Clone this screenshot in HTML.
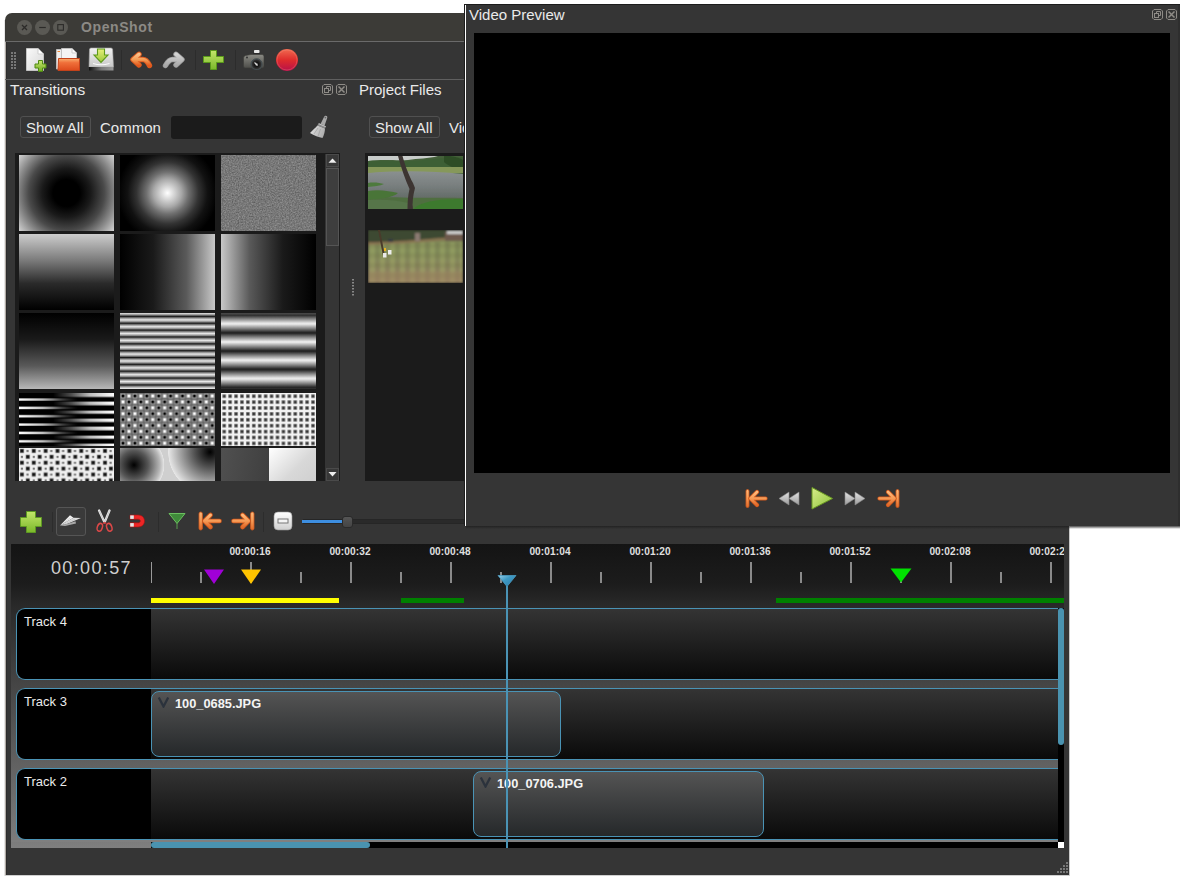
<!DOCTYPE html>
<html><head><meta charset="utf-8">
<style>
*{box-sizing:border-box}
html,body{margin:0;padding:0}
body{width:1180px;height:876px;position:relative;overflow:hidden;background:#fff;font-family:"Liberation Sans",sans-serif;color:#e6e6e6}
.a{position:absolute}
.t{position:absolute;white-space:nowrap;line-height:1}
.th{position:absolute;width:95px;height:76px}
.sep{position:absolute;width:1px;background:#2c2c2c}
.rl{position:absolute;top:547px;font-size:10.1px;font-weight:bold;color:#e0e0e0;white-space:nowrap;line-height:1;letter-spacing:0.1px}
.tk{position:absolute;width:2px;background:#8a8a8a}
</style></head><body>

<!-- white desktop strip left -->
<div class="a" style="left:4px;top:20px;width:1px;height:856px;background:#e6e6e6"></div>
<div class="a" style="left:5px;top:41px;width:1px;height:835px;background:#b0aaa4"></div>

<!-- MAIN WINDOW -->
<div class="a" style="left:6px;top:41px;width:1063px;height:834px;background:#353535;border-left:1px solid #2c2c2c"></div>
<!-- title bar -->
<div class="a" style="left:5px;top:13px;width:470px;height:28px;background:#3c3b37;border-top-left-radius:7px"></div>
<div class="a" style="left:5px;top:41px;width:470px;height:1px;background:#6a6a6a"></div>
<div class="a" style="left:17px;top:20px;width:15px;height:15px;border-radius:50%;background:#5a5954"></div>
<div class="a" style="left:35px;top:20px;width:15px;height:15px;border-radius:50%;background:#5a5954"></div>
<div class="a" style="left:53px;top:20px;width:15px;height:15px;border-radius:50%;background:#5a5954"></div>
<svg class="a" style="left:17px;top:20px" width="51" height="15">
 <path d="M5 5 L10 10 M10 5 L5 10" stroke="#2c2b29" stroke-width="1.3"/>
 <path d="M22.2 7.5 H28.8" stroke="#2c2b29" stroke-width="1.2"/>
 <rect x="40.8" y="4.6" width="5.6" height="5.6" fill="none" stroke="#2c2b29" stroke-width="1.1"/>
</svg>
<div class="t" style="left:81px;top:20px;font-size:14px;font-weight:bold;color:#8c8a85;letter-spacing:0.6px">OpenShot</div>

<!-- toolbar -->
<div class="a" style="left:5px;top:79px;width:470px;height:1px;background:#5f5f5f"></div>
<svg class="a" style="left:11px;top:52px" width="6" height="18">
 <g fill="#777"><rect x="0" y="0" width="2" height="2"/><rect x="3" y="0" width="2" height="2"/><rect x="0" y="3" width="2" height="2"/><rect x="3" y="3" width="2" height="2"/><rect x="0" y="6" width="2" height="2"/><rect x="3" y="6" width="2" height="2"/><rect x="0" y="9" width="2" height="2"/><rect x="3" y="9" width="2" height="2"/><rect x="0" y="12" width="2" height="2"/><rect x="3" y="12" width="2" height="2"/><rect x="0" y="15" width="2" height="2"/><rect x="3" y="15" width="2" height="2"/></g>
</svg>
<!-- new -->
<svg class="a" style="left:25px;top:47px" width="24" height="26">
 <defs><linearGradient id="pg" x1="0" y1="0" x2="1" y2="1"><stop offset="0" stop-color="#fafafa"/><stop offset="1" stop-color="#d6d6d6"/></linearGradient>
 <linearGradient id="gp" x1="0" y1="0" x2="0" y2="1"><stop offset="0" stop-color="#c8e66e"/><stop offset="1" stop-color="#72ad22"/></linearGradient></defs>
 <path d="M1.5 1.5 H13 L18.5 7 V23.5 H1.5 Z" fill="url(#pg)" stroke="#c4c4c4" stroke-width="1"/>
 <path d="M13 1.5 V7 H18.5" fill="#fff" stroke="#cfcfcf"/>
 <path d="M13.5 13.5 h4 v3.5 h3.5 v4 h-3.5 v3.5 h-4 v-3.5 h-3.5 v-4 h3.5 z" fill="url(#gp)" stroke="#4e8a12" stroke-width="1"/>
</svg>
<!-- open -->
<svg class="a" style="left:55px;top:48px" width="26" height="24">
 <defs><linearGradient id="og" x1="0" y1="0" x2="0" y2="1"><stop offset="0" stop-color="#f9b070"/><stop offset="0.35" stop-color="#f0703a"/><stop offset="1" stop-color="#dc4a1c"/></linearGradient></defs>
 <path d="M1.5 1.5 H11 V21 H1.5 Z" fill="#eee" stroke="#bbb"/>
 <path d="M2.5 3.5 H5" stroke="#f08a3a"/>
 <path d="M6.5 0.5 H17 L21.5 5 V21 H6.5 Z" fill="#f4f4f4" stroke="#c0c0c0"/>
 <path d="M17 0.5 V5 H21.5" fill="#fff" stroke="#ccc"/>
 <path d="M3.5 10.5 H24.5 V22.5 H3 Z" fill="url(#og)" stroke="#c4421a"/>
</svg>
<!-- save -->
<svg class="a" style="left:85px;top:45px" width="35" height="30">
 <defs><linearGradient id="sg" x1="0" y1="0" x2="0" y2="1"><stop offset="0" stop-color="#f2f2f2"/><stop offset="1" stop-color="#c8c8c8"/></linearGradient>
 <linearGradient id="sa" x1="0" y1="0" x2="0" y2="1"><stop offset="0" stop-color="#e6f07a"/><stop offset="1" stop-color="#9cc83a"/></linearGradient>
 <linearGradient id="sd" x1="0" y1="0" x2="1" y2="0"><stop offset="0" stop-color="#111"/><stop offset="0.5" stop-color="#777"/><stop offset="1" stop-color="#999"/></linearGradient></defs>
 <path d="M6 3 H26 Q27.5 3 27.6 4.5 L28.5 22 H4 L4.5 4.5 Q4.6 3 6 3 Z" fill="url(#sg)" stroke="#aaa" stroke-width="0.6"/>
 <path d="M8 18.5 Q16 21 24.5 18.5" stroke="#fafafa" stroke-width="1.2" fill="none"/>
 <rect x="4" y="22" width="24.5" height="3.5" fill="url(#sd)"/>
 <path d="M12.5 4 H19.5 V10 H23 L16 17.5 L9 10 H12.5 Z" fill="url(#sa)" stroke="#5e9a1c" stroke-width="1.1"/>
</svg>
<div class="sep" style="left:121px;top:50px;height:20px"></div>
<!-- undo -->
<svg class="a" style="left:125px;top:45px" width="30" height="28">
 <defs><linearGradient id="ug" x1="0" y1="0" x2="0" y2="1"><stop offset="0" stop-color="#fbc08a"/><stop offset="0.5" stop-color="#f39a52"/><stop offset="1" stop-color="#e4581c"/></linearGradient></defs>
 <path d="M14 9.3 L8 14.5 L14 20 M8.3 14.5 H18 Q21.5 14.5 24.5 20.5" fill="none" stroke="#dc5a1e" stroke-width="5.4" stroke-linecap="round" stroke-linejoin="round"/>
 <path d="M14 9.3 L8 14.5 L14 20 M8.3 14.5 H18 Q21.5 14.5 24.5 20.5" fill="none" stroke="url(#ug)" stroke-width="3.6" stroke-linecap="round" stroke-linejoin="round"/>
</svg>
<!-- redo -->
<svg class="a" style="left:160px;top:45px" width="30" height="28">
 <defs><linearGradient id="rdg" x1="0" y1="0" x2="0" y2="1"><stop offset="0" stop-color="#d4d4d4"/><stop offset="1" stop-color="#a8a8a8"/></linearGradient></defs>
 <path d="M16 9.3 L22 14.5 L16 20 M21.7 14.5 H12.5 Q9 14.5 5.5 20.5" fill="none" stroke="#9a9a9a" stroke-width="5.4" stroke-linecap="round" stroke-linejoin="round"/>
 <path d="M16 9.3 L22 14.5 L16 20 M21.7 14.5 H12.5 Q9 14.5 5.5 20.5" fill="none" stroke="url(#rdg)" stroke-width="3.8" stroke-linecap="round" stroke-linejoin="round"/>
</svg>
<div class="sep" style="left:195px;top:50px;height:20px"></div>
<!-- add track plus -->
<svg class="a" style="left:203px;top:49px" width="22" height="22">
 <defs><linearGradient id="gp2" x1="0" y1="0" x2="0" y2="1"><stop offset="0" stop-color="#c3e66a"/><stop offset="1" stop-color="#7ab82a"/></linearGradient></defs>
 <path d="M7.5 1.5 h6 v6 h7 v6 h-7 v7 h-6 v-7 h-7 v-6 h7 z" fill="url(#gp2)" stroke="#5a9a1a"/>
</svg>
<div class="sep" style="left:235px;top:50px;height:20px"></div>
<!-- camera -->
<svg class="a" style="left:242px;top:49px" width="24" height="21">
 <defs><linearGradient id="cb" x1="0" y1="0" x2="0" y2="1"><stop offset="0" stop-color="#8a8a84"/><stop offset="1" stop-color="#4e4e4a"/></linearGradient>
 <radialGradient id="cl" cx="0.5" cy="0.5" r="0.5"><stop offset="0" stop-color="#999"/><stop offset="0.35" stop-color="#111"/><stop offset="0.8" stop-color="#333"/><stop offset="1" stop-color="#5a6468"/></radialGradient></defs>
 <rect x="12" y="1" width="5.5" height="3" rx="0.8" fill="#e8e8e8"/>
 <rect x="11" y="4" width="7" height="2.5" fill="#2a2a2a"/>
 <path d="M1.5 9 Q1.5 7 3.5 6.5 L9 5.5 H20 Q22 5.5 22 7.5 V17 Q22 19 20 19 H3 Q1.5 19 1.5 17 Z" fill="url(#cb)" stroke="#3a3a38" stroke-width="0.6"/>
 <circle cx="14.6" cy="15.3" r="5.6" fill="url(#cl)" stroke="#3a4448" stroke-width="0.8"/>
 <path d="M12.5 13.5 L15.5 16.5" stroke="#ddd" stroke-width="1.2"/>
 <circle cx="5" cy="8.5" r="1" fill="#333"/>
</svg>
<!-- record -->
<svg class="a" style="left:275px;top:48px" width="24" height="24">
 <defs><linearGradient id="rg" x1="0" y1="0" x2="0" y2="1"><stop offset="0" stop-color="#f06a50"/><stop offset="0.5" stop-color="#de2c2c"/><stop offset="1" stop-color="#b8104a"/></linearGradient></defs>
 <circle cx="12" cy="12" r="11" fill="url(#rg)"/>
 <circle cx="12" cy="12" r="10" fill="none" stroke="#f4a090" stroke-opacity="0.35" stroke-width="0.8"/>
</svg>

<!-- DOCK: Transitions -->
<div class="t" style="left:10px;top:82px;font-size:15.5px;color:#eaeaea">Transitions</div>
<svg class="a" style="left:322px;top:84px" width="26" height="12">
 <g fill="none" stroke="#8e8b86" stroke-width="1">
  <path d="M2 0.5 H9 L10.5 2 V9 L9 10.5 H2 L0.5 9 V2 Z"/>
  <rect x="2.5" y="4.5" width="4" height="4"/><path d="M4.5 4.5 V2.5 H8.5 V6.5 H6.5"/>
  <path d="M16 0.5 H23 L24.5 2 V9 L23 10.5 H16 L14.5 9 V2 Z"/>
  <path d="M16.5 2.5 L22.5 8.5 M22.5 2.5 L16.5 8.5" stroke-width="1.5"/>
 </g>
</svg>
<div class="a" style="left:20px;top:116px;width:71px;height:22px;border:1px solid #505050;border-radius:3px;background:#353535"></div>
<div class="t" style="left:26px;top:120px;font-size:15px;color:#eaeaea">Show All</div>
<div class="t" style="left:100px;top:120px;font-size:15px;color:#eaeaea">Common</div>
<div class="a" style="left:171px;top:116px;width:131px;height:23px;border-radius:3px;background:#1b1b1b"></div>
<!-- broom -->
<svg class="a" style="left:309px;top:114px" width="20" height="25">
 <defs><linearGradient id="br" x1="0" y1="0" x2="1" y2="0.3"><stop offset="0" stop-color="#e4e4e4"/><stop offset="1" stop-color="#b0b0b0"/></linearGradient></defs>
 <path d="M11.5 10 L15 3 C16 0.8 19 1.6 18.2 4 L15.6 11.5 Z" fill="#a8a8a8"/>
 <circle cx="16.4" cy="3.6" r="0.9" fill="#666"/>
 <path d="M9.5 9 L17 12.2 L16 14.5 L8.5 11.5 Z" fill="#8a8a8a"/>
 <path d="M10 9.8 L16.6 12.6" stroke="#d8d8d8" stroke-width="0.8"/>
 <path d="M8.5 11.5 L16 14.5 C16 17.5 15 21 13.5 24 C10 23.5 5 21.5 1 19 C3.5 16.5 6.5 13.5 8.5 11.5 Z" fill="url(#br)"/>
 <path d="M5 20 L9 14 M9 22.5 L11.5 15" stroke="#999" stroke-width="0.6"/>
</svg>
<!-- transitions list -->
<div class="a" style="left:15px;top:153px;width:325px;height:328px;background:#1b1b1b"></div>
<!-- scrollbar -->
<div class="a" style="left:325px;top:154px;width:14px;height:327px;background:#353535"></div>
<div class="a" style="left:326px;top:154px;width:13px;height:13px;border:1px solid #4a4a4a;background:#383838"></div>
<svg class="a" style="left:326px;top:154px" width="13" height="13"><path d="M2.5 8.8 L6.5 4.5 L10.5 8.8 Z" fill="#eee"/></svg>
<div class="a" style="left:326px;top:168px;width:13px;height:78px;border:1px solid #555;background:#3e3e3e"></div>
<div class="a" style="left:326px;top:468px;width:13px;height:13px;border:1px solid #4a4a4a;background:#383838"></div>
<svg class="a" style="left:326px;top:468px" width="13" height="13"><path d="M2.5 4 L6.5 8.5 L10.5 4 Z" fill="#eee"/></svg>

<!-- thumbnails row 1 -->
<div class="th" style="left:19px;top:155px;background:radial-gradient(circle 61px at 50% 50%,#000 0%,#000 22%,#1a1a1a 40%,#4a4a4a 62%,#8a8a8a 80%,#d4d4d4 100%)"></div>
<div class="th" style="left:120px;top:155px;background:radial-gradient(circle 50px at 50% 50%,#fff 0%,#e6e6e6 8%,#a8a8a8 28%,#707070 42%,#333 62%,#111 80%,#000 100%)"></div>
<div class="th" style="left:221px;top:155px;background:#7a7a7a"><svg width="95" height="76"><filter id="nz" x="0" y="0" width="100%" height="100%" color-interpolation-filters="sRGB"><feTurbulence type="fractalNoise" baseFrequency="0.7" numOctaves="3" seed="5"/><feColorMatrix type="matrix" values="0.3 0 0 0 0.32  0.3 0 0 0 0.32  0.3 0 0 0 0.32  0 0 0 0 1"/></filter><rect width="95" height="76" filter="url(#nz)"/></svg></div>
<!-- row 2 -->
<div class="th" style="left:19px;top:234px;background:linear-gradient(to bottom,#cdcdcd 0%,#7a7a7a 35%,#2a2a2a 65%,#000 100%)"></div>
<div class="th" style="left:120px;top:234px;background:linear-gradient(to right,#000 0%,#1a1a1a 35%,#5a5a5a 70%,#c8c8c8 100%)"></div>
<div class="th" style="left:221px;top:234px;background:linear-gradient(to left,#000 0%,#1a1a1a 35%,#5a5a5a 70%,#c8c8c8 100%)"></div>
<!-- row 3 -->
<div class="th" style="left:19px;top:313px;background:linear-gradient(to bottom,#000 0%,#1a1a1a 35%,#5a5a5a 70%,#b8b8b8 100%)"></div>
<div class="th" style="left:120px;top:313px;background:repeating-linear-gradient(to bottom,#e8e8e8 0px,#8a8a8a 2px,#1a1a1a 3.4px,#8a8a8a 5px,#e8e8e8 6.85px)"></div>
<div class="th" style="left:221px;top:313px;background:repeating-linear-gradient(to bottom,#1a1a1a 0px,#8a8a8a 4.6px,#f4f4f4 9.15px,#8a8a8a 13.7px,#1a1a1a 18.3px);background-position:0 1.5px"></div>
<!-- row 4 -->
<div class="th" style="left:19px;top:393px;height:53px;background:#000;overflow:hidden">
 <div class="a" style="left:0;top:0;width:95px;height:53px;background:repeating-linear-gradient(to bottom,#000 0px,#000 4.6px,#fff 6px,#fff 7.2px,#000 8.35px);-webkit-mask-image:linear-gradient(to right,#000 0%,rgba(0,0,0,.75) 25%,rgba(0,0,0,.3) 45%,transparent 62%)"></div>
 <div class="a" style="left:0;top:0;width:95px;height:53px;background:repeating-linear-gradient(to bottom,#fff 0px,#fff 2.8px,#000 4px,#000 8.35px);background-position:0 0.6px;-webkit-mask-image:linear-gradient(to left,#000 0%,rgba(0,0,0,.75) 25%,rgba(0,0,0,.3) 45%,transparent 64%)"></div>
</div>
<div class="th" style="left:120px;top:393px;height:53px;background:#5e5e5e;overflow:hidden">
 <svg width="95" height="53"><defs><pattern id="ck" width="11.9" height="11.8" patternUnits="userSpaceOnUse" x="0" y="0">
  <rect x="0.6" y="0.6" width="4.8" height="4.8" fill="#a8a8a8"/><rect x="1.6" y="1.6" width="2.8" height="2.8" fill="#000"/>
  <rect x="6.55" y="0.6" width="4.8" height="4.8" fill="#8c8c8c"/><rect x="7.55" y="1.6" width="2.8" height="2.8" fill="#fff"/>
  <rect x="0.6" y="6.5" width="4.8" height="4.8" fill="#8c8c8c"/><rect x="1.6" y="7.5" width="2.8" height="2.8" fill="#fff"/>
  <rect x="6.55" y="6.5" width="4.8" height="4.8" fill="#a8a8a8"/><rect x="7.55" y="7.5" width="2.8" height="2.8" fill="#000"/>
 </pattern></defs><rect width="95" height="53" fill="url(#ck)"/></svg>
</div>
<div class="th" style="left:221px;top:393px;height:53px;background:#f2f2f2;overflow:hidden">
 <svg width="95" height="53"><defs><pattern id="ws" width="5.92" height="5.9" patternUnits="userSpaceOnUse" x="0.3" y="0.3"><rect x="1" y="1" width="3.8" height="3.8" fill="#aaa"/><rect x="1.5" y="1.5" width="2.8" height="2.8" fill="#383838"/></pattern></defs><rect width="95" height="53" fill="url(#ws)"/></svg>
</div>
<!-- row 5 -->
<div class="th" style="left:19px;top:448px;height:33px;background:#f0f0f0;overflow:hidden">
 <svg width="95" height="33"><defs><pattern id="bs" width="11.875" height="11.8" patternUnits="userSpaceOnUse" x="0" y="0"><rect x="0.6" y="0.6" width="4.6" height="4.6" fill="#aaa"/><rect x="1.3" y="1.3" width="3.2" height="3.2" fill="#111"/><rect x="7.4" y="1.9" width="2.2" height="2.2" fill="#777"/><rect x="1.8" y="7.8" width="2.2" height="2.2" fill="#777"/><rect x="6.5" y="6.5" width="4.6" height="4.6" fill="#aaa"/><rect x="7.2" y="7.2" width="3.2" height="3.2" fill="#111"/></pattern></defs><rect width="95" height="33" fill="url(#bs)"/></svg>
</div>
<div class="th" style="left:120px;top:448px;height:33px;overflow:hidden;background:radial-gradient(circle 30.5px at 14px 17px,#000 0px,#555 14px,#b8b8b8 26px,#e4e4e4 30px,transparent 30.5px),radial-gradient(circle 42px at 90px 4px,#000 0px,#555 16px,#b0b0b0 32px,#e6e6e6 41.5px,#cfcfcf 42px)"></div>
<div class="th" style="left:221px;top:448px;height:33px;overflow:hidden;background:linear-gradient(100deg,#505050 0%,#404040 50%,#2c2c2c 100%)">
 <div class="a" style="left:48px;top:0;width:47px;height:33px;background:linear-gradient(135deg,#ffffff,#d8d8d8 60%,#cfcfcf)"></div>
</div>

<!-- splitter dots -->
<svg class="a" style="left:352px;top:279px" width="3" height="18"><g fill="#888"><rect y="0" width="2" height="1.5"/><rect y="3" width="2" height="1.5"/><rect y="6" width="2" height="1.5"/><rect y="9" width="2" height="1.5"/><rect y="12" width="2" height="1.5"/><rect y="15" width="2" height="1.5"/></g></svg>

<!-- DOCK: Project Files -->
<div class="t" style="left:359px;top:82px;font-size:15px;color:#eaeaea">Project Files</div>
<div class="a" style="left:369px;top:116px;width:71px;height:22px;border:1px solid #505050;border-radius:3px;background:#353535"></div>
<div class="t" style="left:375px;top:120px;font-size:15px;color:#eaeaea">Show All</div>
<div class="t" style="left:449px;top:120px;font-size:15px;color:#eaeaea">Video</div>
<div class="a" style="left:365px;top:153px;width:110px;height:328px;background:#1b1b1b"></div>
<!-- project file thumbs -->
<svg class="a" style="left:368px;top:156px" width="95" height="53">
 <defs>
  <linearGradient id="pond" x1="0" y1="0" x2="0" y2="1"><stop offset="0" stop-color="#8a9090"/><stop offset="0.5" stop-color="#7a8080"/><stop offset="1" stop-color="#646c68"/></linearGradient>
  <filter id="bl1"><feGaussianBlur stdDeviation="0.7"/></filter>
 </defs>
 <rect width="95" height="53" fill="#4f6e40"/>
 <g filter="url(#bl1)">
 <rect width="95" height="12" fill="#44603a"/>
 <path d="M0 0 H70 C60 3 50 2 40 4 C30 5 15 3 0 5 Z" fill="#c8ccca"/>
 <path d="M0 5 C15 4 30 6 45 5 C60 4 70 2 95 1 V12 H0 Z" fill="#3e5e34"/>
 <path d="M76 0 C82 -1 92 2 95 4 V14 C88 13 80 10 76 6 Z" fill="#2e4e28"/>
 <rect y="11" width="95" height="6" fill="#86985a"/>
 <path d="M0 17 C20 15 60 14 95 18 V42 C70 41 40 43 0 40 Z" fill="url(#pond)"/>
 <path d="M0 27 C6 26 12 27 16 28 C12 30 6 30 0 31 Z" fill="#4e7a3c"/>
 <path d="M0 35 C10 33 22 35 30 37 C25 42 10 43 0 44 Z" fill="#4a7438"/>
 <path d="M45 53 C55 44 75 43 95 43 V53 Z" fill="#3e7a2e"/>
 <path d="M0 44 C15 43 30 44 45 48 V53 H0 Z" fill="#56744a"/>
 </g>
 <path d="M30 0 L34.5 0 C37 9 41 20 45 27 L47 32 C45 40 44 47 45 53 L39.5 53 C39.5 46 40 39 41.5 33 C37 23 33 11 30 0 Z" fill="#3e3632" filter="url(#bl1)"/>
</svg>
<svg class="a" style="left:368px;top:230px" width="95" height="53">
 <defs>
  <linearGradient id="fld" x1="0" y1="0" x2="0" y2="1"><stop offset="0" stop-color="#7c8656"/><stop offset="0.45" stop-color="#808a58"/><stop offset="1" stop-color="#957f62"/></linearGradient>
  <filter id="bl2"><feGaussianBlur stdDeviation="1"/></filter>
  <pattern id="chk" width="10" height="10" patternUnits="userSpaceOnUse" x="2" y="3"><rect width="5" height="10" fill="#b4c070" opacity="0.3"/><rect width="10" height="5" fill="#6a6a40" opacity="0.18"/></pattern>
 </defs>
 <g filter="url(#bl2)">
 <rect width="95" height="53" fill="url(#fld)"/>
 <rect y="12" width="95" height="41" fill="url(#chk)"/>
 <path d="M0 0 H95 V6 C80 8 60 9 40 11 C25 12 10 12 0 13 Z" fill="#3e4830"/>
 <path d="M0 12 C20 12 50 10 95 6 V9 C60 12 30 14 0 15 Z" fill="#8a6e50" opacity="0.8"/>
 <path d="M0 42 H95 V53 H0 Z" fill="#9c8460" opacity="0.5"/>
 <rect x="77" y="2" width="18" height="9" fill="#6e5a4d"/>
 <rect x="79" y="1" width="16" height="3" fill="#d0d0d0"/>
 <rect x="47" y="3" width="5" height="8" fill="#8a7a72"/>
 <rect x="20" y="9" width="5" height="3" fill="#303840"/>
 </g>
 <path d="M10 0 L12 0 L17 26 L15 26 Z" fill="#4a3a2a" filter="url(#bl1)"/>
 <rect x="15" y="23" width="3.5" height="4.5" fill="#eaeaea"/>
 <rect x="20" y="20" width="3.5" height="4.5" fill="#eee"/>
 <rect x="16" y="18" width="2" height="3" fill="#e8b020"/>
</svg>

<!-- TIMELINE TOOLBAR -->
<svg class="a" style="left:20px;top:511px" width="22" height="22">
 <path d="M6.5 0.5 h9 v6 h6 v9 h-6 v6 h-9 v-6 h-6 v-9 h6 z" fill="url(#gp2)" stroke="#5e9a22"/>
</svg>
<div class="sep" style="left:52px;top:512px;height:20px"></div>
<div class="a" style="left:56px;top:507px;width:30px;height:29px;border:1px solid #555;border-radius:3px;background:#3a3a3a"></div>
<svg class="a" style="left:59px;top:513px" width="24" height="15">
 <path d="M1 12.4 L11 2.3 L14.5 4.8 Z" fill="#f2f2f2"/>
 <path d="M1 12.4 L14.5 4.8 L22 5 L8.5 10.8 Z" fill="#dcdcdc"/>
 <path d="M1 12.4 L8.5 10.8 L16.5 8.3 L17 10.6 L6 12.9 Z" fill="#a8a8a8"/>
 <path d="M3 11.6 L11.5 4.5 M5 11.5 L16 6.2" stroke="#bbb" stroke-width="0.5"/>
</svg>
<svg class="a" style="left:95px;top:509px" width="20" height="24">
 <path d="M4.1 1.5 L9.6 13.4 M14.5 1.5 L9.6 13.4" stroke="#e8e8e8" stroke-width="2.3" stroke-linecap="round"/>
 <path d="M4.1 1.5 L9.6 13.4 M14.5 1.5 L9.6 13.4" stroke="#aaa" stroke-width="0.5"/>
 <ellipse cx="4.8" cy="18.3" rx="2.5" ry="4" fill="none" stroke="#dd4848" stroke-width="1.5" transform="rotate(20 4.8 18.3)"/>
 <ellipse cx="14.3" cy="18.3" rx="2.5" ry="4" fill="none" stroke="#dd4848" stroke-width="1.5" transform="rotate(-20 14.3 18.3)"/>
 <path d="M8 14 L11.2 14" stroke="#c83030" stroke-width="1.5"/>
</svg>
<svg class="a" style="left:129px;top:513px" width="17" height="16">
 <path d="M1 2 H9 C13.3 2 15.5 4.8 15.5 8 C15.5 11.2 13.3 14 9 14 H1 V9.8 H9 C10.5 9.8 11.3 9 11.3 8 C11.3 7 10.5 6.2 9 6.2 H1 Z" fill="#ec2626" stroke="#a81010" stroke-width="0.6"/>
 <rect x="1.2" y="2.4" width="3.6" height="3.5" fill="#e0e8e8"/><rect x="1.2" y="10.1" width="3.6" height="3.5" fill="#e0e8e8"/>
</svg>
<div class="sep" style="left:158px;top:512px;height:20px"></div>
<svg class="a" style="left:168px;top:512px" width="19" height="18">
 <path d="M1 1.5 H17 L9 11.5 Z" fill="#3f8a3a" stroke="#6cc060" stroke-width="1"/>
 <path d="M9 11 V17" stroke="#5aa050" stroke-width="1"/>
</svg>
<svg class="a" style="left:197px;top:511px" width="26" height="20">
 <rect x="2" y="1" width="3.4" height="18" rx="1.7" fill="url(#or)" stroke="#d2581c" stroke-width="0.8"/>
 <path d="M7.5 10 L13.5 4 M7.5 10 L13.5 16 M7.5 10 H22.5" stroke="#d2581c" stroke-width="4.6" stroke-linecap="round" fill="none"/>
 <path d="M7.5 10 L13.5 4 M7.5 10 L13.5 16 M7.5 10 H22.5" stroke="url(#or)" stroke-width="3" stroke-linecap="round" fill="none"/>
</svg>
<svg class="a" style="left:230px;top:511px" width="26" height="20">
 <rect x="20.6" y="1" width="3.4" height="18" rx="1.7" fill="url(#or)" stroke="#d2581c" stroke-width="0.8"/>
 <path d="M18.5 10 L12.5 4 M18.5 10 L12.5 16 M18.5 10 H3.5" stroke="#d2581c" stroke-width="4.6" stroke-linecap="round" fill="none"/>
 <path d="M18.5 10 L12.5 4 M18.5 10 L12.5 16 M18.5 10 H3.5" stroke="url(#or)" stroke-width="3" stroke-linecap="round" fill="none"/>
</svg>
<div class="sep" style="left:263px;top:512px;height:20px"></div>
<svg class="a" style="left:273px;top:511px" width="20" height="20">
 <defs><linearGradient id="zw" x1="0" y1="0" x2="0" y2="1"><stop offset="0" stop-color="#fff"/><stop offset="1" stop-color="#cfcfcf"/></linearGradient></defs>
 <rect x="1" y="1" width="18" height="18" rx="4" fill="url(#zw)" stroke="#999" stroke-width="0.6"/>
 <rect x="5" y="8" width="10" height="4" fill="#f4f4f4" stroke="#777" stroke-width="1"/>
</svg>
<div class="a" style="left:302px;top:519px;width:170px;height:5px;border-radius:2px;background:#2a2a2a;border:1px solid #262626"></div>
<div class="a" style="left:302px;top:520px;width:42px;height:3px;background:#3d8ee0"></div>
<div class="a" style="left:342px;top:516px;width:11px;height:12px;border-radius:3px;background:linear-gradient(#555,#444);border:1px solid #2a2a2a"></div>

<!-- TIMELINE -->
<div class="a" style="left:11px;top:544px;width:1053px;height:304px;background:linear-gradient(to bottom,#141414 0px,#1c1c1c 40px,#292929 61px,#454545 140px,#616161 220px,#7c7c7c 297px,#7f7f7f 304px)"></div>
<div class="t" style="left:51px;top:559px;font-size:18px;color:#cfcfcf;letter-spacing:1.35px">00:00:57</div>

<div class="tk" style="left:151px;top:562px;height:21px;width:1px;background:#9a9a9a"></div>
<div class="tk" style="left:250px;top:562px;height:21px"></div>
<div class="tk" style="left:350px;top:562px;height:21px"></div>
<div class="tk" style="left:450px;top:562px;height:21px"></div>
<div class="tk" style="left:550px;top:562px;height:21px"></div>
<div class="tk" style="left:650px;top:562px;height:21px"></div>
<div class="tk" style="left:750px;top:562px;height:21px"></div>
<div class="tk" style="left:850px;top:562px;height:21px"></div>
<div class="tk" style="left:950px;top:562px;height:21px"></div>
<div class="tk" style="left:1050px;top:562px;height:21px"></div>
<div class="tk" style="left:200px;top:572px;height:11px"></div>
<div class="tk" style="left:300px;top:572px;height:11px"></div>
<div class="tk" style="left:400px;top:572px;height:11px"></div>
<div class="tk" style="left:500px;top:572px;height:11px"></div>
<div class="tk" style="left:600px;top:572px;height:11px"></div>
<div class="tk" style="left:700px;top:572px;height:11px"></div>
<div class="tk" style="left:800px;top:572px;height:11px"></div>
<div class="tk" style="left:900px;top:572px;height:11px"></div>
<div class="tk" style="left:1000px;top:572px;height:11px"></div>

<div class="rl" style="left:229px;width:42px;text-align:center">00:00:16</div>
<div class="rl" style="left:329px;width:42px;text-align:center">00:00:32</div>
<div class="rl" style="left:429px;width:42px;text-align:center">00:00:48</div>
<div class="rl" style="left:529px;width:42px;text-align:center">00:01:04</div>
<div class="rl" style="left:629px;width:42px;text-align:center">00:01:20</div>
<div class="rl" style="left:729px;width:42px;text-align:center">00:01:36</div>
<div class="rl" style="left:829px;width:42px;text-align:center">00:01:52</div>
<div class="rl" style="left:929px;width:42px;text-align:center">00:02:08</div>
<div class="a" style="left:1029px;top:540px;width:35px;height:20px;overflow:hidden"><div class="rl" style="left:0;top:7px;width:42px;text-align:center">00:02:24</div></div>
<div class="a" style="left:1064px;top:540px;width:5px;height:320px;background:#353535"></div>
<svg class="a" style="left:200px;top:567px" width="70" height="20">
 <path d="M4 2.5 H24 L14 17 Z" fill="#a000d8"/>
 <path d="M41 2.5 H61 L51 17 Z" fill="#ffc400"/>
</svg>
<svg class="a" style="left:888px;top:566px" width="26" height="20">
 <path d="M2.5 2.5 H23.5 L13 16.5 Z" fill="#00e000"/>
</svg>
<div class="a" style="left:151px;top:598px;width:188px;height:5px;background:#ffff00"></div>
<div class="a" style="left:401px;top:598px;width:63px;height:5px;background:#008000"></div>
<div class="a" style="left:776px;top:598px;width:288px;height:5px;background:#008000"></div>

<div class="a" style="left:16px;top:608px;width:1042px;height:72px;border:1px solid #4a93b5;border-right:none;border-radius:9px 0 0 9px;background:#000;overflow:hidden">
 <div class="a" style="left:134px;top:0;width:908px;height:70px;background:linear-gradient(to bottom,#343434,#0a0a0a)"></div>
</div>
<div class="t" style="left:24px;top:615px;font-size:13px;color:#ececec">Track 4</div>
<div class="a" style="left:16px;top:688px;width:1042px;height:72px;border:1px solid #4a93b5;border-right:none;border-radius:9px 0 0 9px;background:#000;overflow:hidden">
 <div class="a" style="left:134px;top:0;width:908px;height:70px;background:linear-gradient(to bottom,#343434,#0a0a0a)"></div>
</div>
<div class="t" style="left:24px;top:695px;font-size:13px;color:#ececec">Track 3</div>
<div class="a" style="left:16px;top:768px;width:1042px;height:72px;border:1px solid #4a93b5;border-right:none;border-radius:9px 0 0 9px;background:#000;overflow:hidden">
 <div class="a" style="left:134px;top:0;width:908px;height:70px;background:linear-gradient(to bottom,#343434,#0a0a0a)"></div>
</div>
<div class="t" style="left:24px;top:775px;font-size:13px;color:#ececec">Track 2</div>
<div class="a" style="left:151px;top:691px;width:410px;height:66px;border:1.5px solid #4a93b5;border-radius:8px;background:linear-gradient(to bottom,#545454,#25282a)"></div>
<svg class="a" style="left:157px;top:696px" width="13" height="12"><path d="M1.8 1.5 L6.5 10.5 L11.2 1.5" fill="none" stroke="#2b323c" stroke-width="2.3" stroke-linejoin="miter"/></svg>
<div class="t" style="left:175px;top:697px;font-size:12.8px;font-weight:bold;color:#f4f4f4;margin-top:1px">100_0685.JPG</div>
<div class="a" style="left:473px;top:771px;width:291px;height:66px;border:1.5px solid #4a93b5;border-radius:8px;background:linear-gradient(to bottom,#545454,#25282a)"></div>
<svg class="a" style="left:479px;top:776px" width="13" height="12"><path d="M1.8 1.5 L6.5 10.5 L11.2 1.5" fill="none" stroke="#2b323c" stroke-width="2.3" stroke-linejoin="miter"/></svg>
<div class="t" style="left:497px;top:777px;font-size:12.8px;font-weight:bold;color:#f4f4f4;margin-top:1px">100_0706.JPG</div>
<div class="a" style="left:11px;top:840px;width:1047px;height:2px;background:#7f7f7f"></div>
<div class="a" style="left:151px;top:842px;width:907px;height:6px;background:#000"></div>
<div class="a" style="left:151px;top:842px;width:219px;height:6px;border-radius:3px;background:#4a93b0"></div>
<div class="a" style="left:1058px;top:608px;width:6px;height:240px;background:#000"></div>
<div class="a" style="left:1058px;top:608px;width:6px;height:137px;border-radius:3px;background:#4a93b0"></div>
<div class="a" style="left:1058px;top:842px;width:6px;height:6px;background:#fff"></div>
<div class="a" style="left:506px;top:586px;width:2px;height:262px;background:#4a93b5"></div>
<svg class="a" style="left:497px;top:574px" width="20" height="14">
 <defs><linearGradient id="ph" x1="0" y1="0" x2="1" y2="1"><stop offset="0" stop-color="#9ad0ea"/><stop offset="0.4" stop-color="#3f9ac4"/><stop offset="1" stop-color="#2a7aa8"/></linearGradient></defs>
 <path d="M1 1.5 H19 L10 12.5 Z" fill="url(#ph)" stroke="#4a9ac0" stroke-width="0.8"/>
</svg>
<!-- size grip -->
<svg class="a" style="left:1057px;top:862px" width="12" height="12"><g fill="#777">
 <rect x="9" y="0" width="2" height="2"/><rect x="6" y="3" width="2" height="2"/><rect x="9" y="3" width="2" height="2"/>
 <rect x="3" y="6" width="2" height="2"/><rect x="6" y="6" width="2" height="2"/><rect x="9" y="6" width="2" height="2"/>
 <rect x="0" y="9" width="2" height="2"/><rect x="3" y="9" width="2" height="2"/><rect x="6" y="9" width="2" height="2"/><rect x="9" y="9" width="2" height="2"/>
</g></svg>
<div class="a" style="left:1069px;top:527px;width:1px;height:349px;background:#c8c8c8"></div>
<div class="a" style="left:5px;top:875px;width:1065px;height:1px;background:#d0d0d0"></div>

<!-- VIDEO PREVIEW WINDOW -->
<div class="a" style="left:464px;top:4px;width:716px;height:522px;background:#353535"></div>
<div class="a" style="left:464px;top:4px;width:716px;height:1px;background:#1c1c1c"></div>
<div class="a" style="left:464px;top:4px;width:1px;height:522px;background:#1c1c1c"></div>
<div class="a" style="left:465px;top:5px;width:1px;height:521px;background:#fff"></div>
<div class="a" style="left:1178px;top:5px;width:2px;height:521px;background:#2e2e2e"></div>
<div class="a" style="left:466px;top:526px;width:714px;height:3px;background:linear-gradient(rgba(30,30,30,.8),rgba(60,60,60,0))"></div>
<div class="t" style="left:469px;top:7px;font-size:15px;color:#eaeaea">Video Preview</div>
<svg class="a" style="left:1152px;top:9px" width="26" height="12">
 <g fill="none" stroke="#8e8b86" stroke-width="1">
  <path d="M2 0.5 H9 L10.5 2 V9 L9 10.5 H2 L0.5 9 V2 Z"/>
  <rect x="2.5" y="4.5" width="4" height="4"/><path d="M4.5 4.5 V2.5 H8.5 V6.5 H6.5"/>
  <path d="M16 0.5 H23 L24.5 2 V9 L23 10.5 H16 L14.5 9 V2 Z"/>
  <path d="M16.5 2.5 L22.5 8.5 M22.5 2.5 L16.5 8.5" stroke-width="1.5"/>
 </g>
</svg>
<div class="a" style="left:474px;top:33px;width:696px;height:440px;background:#000"></div>
<!-- video controls -->
<svg class="a" style="left:740px;top:484px" width="165" height="30">
 <defs>
  <linearGradient id="or" x1="0" y1="0" x2="0" y2="1"><stop offset="0" stop-color="#ffb97a"/><stop offset="0.5" stop-color="#f59a55"/><stop offset="1" stop-color="#e06a2a"/></linearGradient>
  <linearGradient id="gr" x1="0" y1="0" x2="0" y2="1"><stop offset="0" stop-color="#e4e4e4"/><stop offset="1" stop-color="#9a9a9a"/></linearGradient>
  <linearGradient id="pl" x1="0" y1="0" x2="1" y2="1"><stop offset="0" stop-color="#d8ec8a"/><stop offset="1" stop-color="#8cc23a"/></linearGradient>
 </defs>
 <!-- jump start: bar + arrow left -->
 <rect x="6" y="5.5" width="3" height="18" rx="1.5" fill="url(#or)" stroke="#d2581c" stroke-width="0.8"/>
 <path d="M10.5 14.5 L17 8 M10.5 14.5 L17 21 M10.5 14.5 H25.5" stroke="#d2581c" stroke-width="4.2" stroke-linecap="round" fill="none"/>
 <path d="M10.5 14.5 L17 8 M10.5 14.5 L17 21 M10.5 14.5 H25.5" stroke="url(#or)" stroke-width="2.6" stroke-linecap="round" fill="none"/>
 <!-- rewind -->
 <path d="M39 14.5 L49 8 V21 Z M49 14.5 L59 8 V21 Z" fill="url(#gr)" stroke="#888" stroke-width="0.6"/>
 <!-- play -->
 <path d="M72 3.5 L92.5 14.5 L72 25 Z" fill="url(#pl)" stroke="#6a9a22" stroke-width="1"/>
 <!-- ff -->
 <path d="M105 8 L115 14.5 L105 21 Z M115 8 L125 14.5 L115 21 Z" fill="url(#gr)" stroke="#888" stroke-width="0.6"/>
 <!-- jump end -->
 <rect x="156" y="5.5" width="3" height="18" rx="1.5" fill="url(#or)" stroke="#d2581c" stroke-width="0.8"/>
 <path d="M154.5 14.5 L148 8 M154.5 14.5 L148 21 M154.5 14.5 H139.5" stroke="#d2581c" stroke-width="4.2" stroke-linecap="round" fill="none"/>
 <path d="M154.5 14.5 L148 8 M154.5 14.5 L148 21 M154.5 14.5 H139.5" stroke="url(#or)" stroke-width="2.6" stroke-linecap="round" fill="none"/>
</svg>

</body></html>
